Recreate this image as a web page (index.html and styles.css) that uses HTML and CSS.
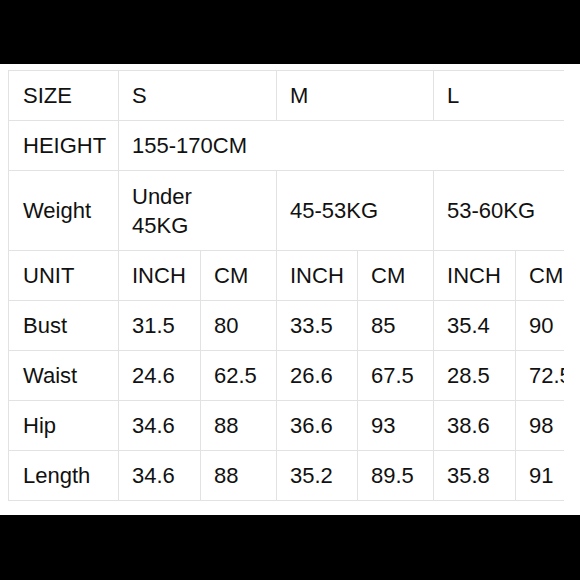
FILE: index.html
```html
<!DOCTYPE html>
<html>
<head>
<meta charset="utf-8">
<link rel="stylesheet" href="styles.css">
</head>
<body>
<div class="bar top"></div>
<main class="sheet">
  <div class="clip">
    <table class="sizes">
      <colgroup>
        <col class="c-label">
        <col class="c-inch"><col class="c-cm">
        <col class="c-inch2"><col class="c-cm">
        <col class="c-inch"><col class="c-cm">
      </colgroup>
      <tr><td>SIZE</td><td colspan="2">S</td><td colspan="2">M</td><td colspan="2">L</td></tr>
      <tr><td>HEIGHT</td><td colspan="6">155-170CM</td></tr>
      <tr class="tall"><td>Weight</td><td colspan="2">Under<br>45KG</td><td colspan="2">45-53KG</td><td colspan="2">53-60KG</td></tr>
      <tr><td>UNIT</td><td>INCH</td><td>CM</td><td>INCH</td><td>CM</td><td>INCH</td><td>CM</td></tr>
      <tr><td>Bust</td><td>31.5</td><td>80</td><td>33.5</td><td>85</td><td>35.4</td><td>90</td></tr>
      <tr><td>Waist</td><td>24.6</td><td>62.5</td><td>26.6</td><td>67.5</td><td>28.5</td><td>72.5</td></tr>
      <tr><td>Hip</td><td>34.6</td><td>88</td><td>36.6</td><td>93</td><td>38.6</td><td>98</td></tr>
      <tr><td>Length</td><td>34.6</td><td>88</td><td>35.2</td><td>89.5</td><td>35.8</td><td>91</td></tr>
    </table>
  </div>
</main>
<div class="bar bottom"></div>
</body>
</html>
```
FILE: styles.css
```css
html, body {
  margin: 0;
  padding: 0;
  background: #000;
}
body {
  width: 580px;
  height: 580px;
  overflow: hidden;
  font-family: "Liberation Sans", Arial, sans-serif;
}
.bar.top { height: 64px; background: #000; }
.bar.bottom { height: 65px; background: #000; }
.sheet {
  height: 451px;
  background: #fff;
  padding: 6px 0 0 8px;
  box-sizing: border-box;
}
.clip {
  width: 556px;
  overflow: hidden;
}
.sizes {
  border-collapse: collapse;
  table-layout: fixed;
  width: 584px;
  color: #111;
  font-size: 22px;
}
.c-label { width: 110px; }
.c-inch { width: 82px; }
.c-inch2 { width: 81px; }
.c-cm { width: 76px; }
.sizes td {
  border: 1px solid #e2e2e2;
  height: 48px;
  padding: 0 0 0 13px;
  vertical-align: middle;
  white-space: nowrap;
  line-height: 29px;
  box-sizing: border-box;
}
.sizes tr { height: 50px; }
.sizes tr.tall { height: 80px; }
.sizes tr.tall td { height: 78px; }
.sizes td:first-child { padding-left: 14px; }
```
